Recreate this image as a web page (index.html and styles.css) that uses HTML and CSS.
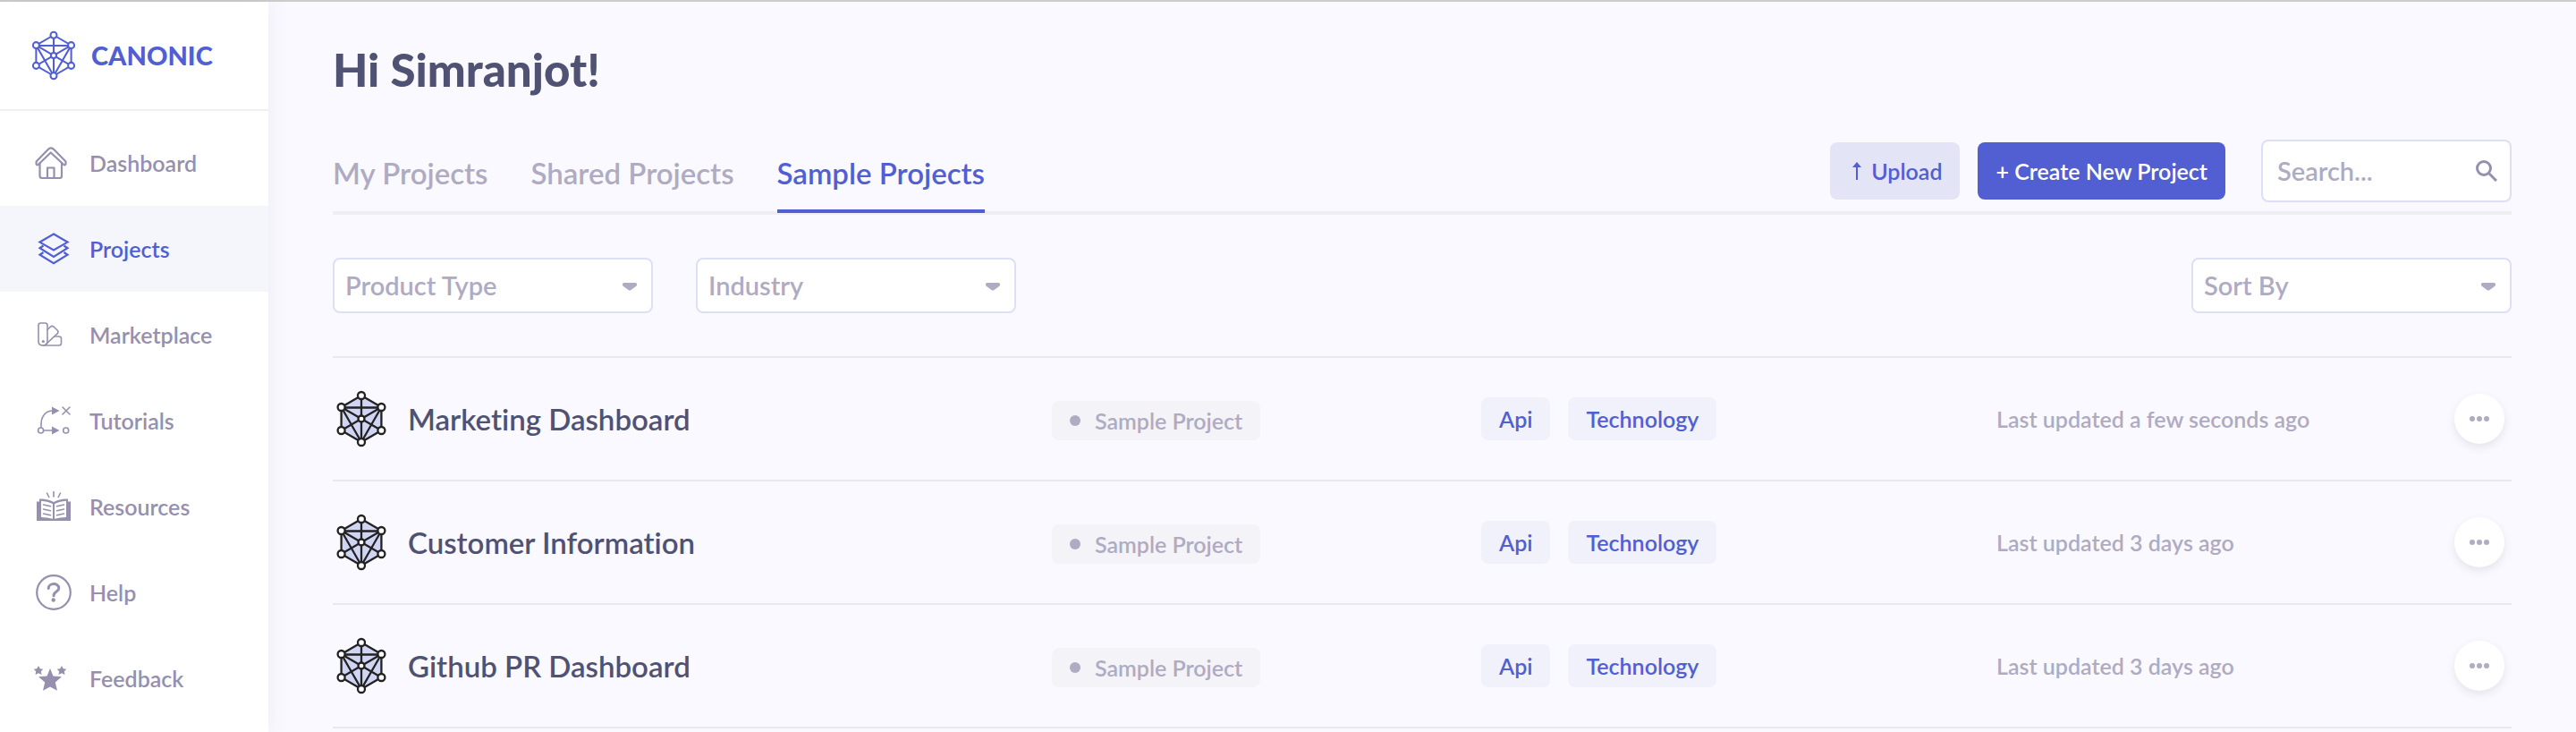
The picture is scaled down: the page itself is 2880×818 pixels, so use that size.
FILE: index.html
```html
<!DOCTYPE html>
<html lang="en">
<head>
<meta charset="utf-8">
<title>Canonic – Projects</title>
<meta name="viewport" content="width=device-width, initial-scale=1">
<link rel="stylesheet" href="styles.css">
</head>
<body>
<svg class="defs" aria-hidden="true">
  <symbol id="mesh" viewBox="0 0 56 64">
    <path class="mesh-fill" d="M28 6 50.400 19V45L28 58 5.600 45V19Z"/>
    <path class="mesh-line" d="M28 6 50.400 19V45L28 58 5.600 45V19ZM5.600 19.500H50.400M28 6V58M5.600 19 50.400 45M50.400 19 5.600 45M5.600 19 28 58 50.400 19"/>
    <g class="mesh-node"><circle cx="28" cy="6" r="4"/><circle cx="50.400" cy="19" r="4"/><circle cx="50.400" cy="45" r="4"/><circle cx="28" cy="58" r="4"/><circle cx="5.600" cy="45" r="4"/><circle cx="5.600" cy="19" r="4"/><circle cx="28" cy="32" r="3.500"/></g>
  </symbol>
  <symbol id="dots" viewBox="0 0 24 8"><circle cx="4" cy="4" r="3"/><circle cx="12" cy="4" r="3"/><circle cx="20" cy="4" r="3"/></symbol>
  <symbol id="caret" viewBox="0 0 16 9"><path d="M1.500 0H14.500Q16 0 16 1.500V2.500Q16 3.300 15 4L9.500 8Q8 9 6.500 8L1 4Q0 3.300 0 2.500V1.500Q0 0 1.500 0Z"/></symbol>
</svg>
<div class="app">
  <aside class="sidebar">
    <a class="brand" href="#"><svg class="brand-mark" aria-hidden="true"><use href="#mesh"/></svg><span>CANONIC</span></a>
    <nav class="nav" aria-label="Main">
      <a class="nav-item" href="#">
        <svg class="nav-icon" viewBox="0 0 40 40" aria-hidden="true"><g class="stroke"><path d="M8.500 20V34.500Q8.500 37 11 37H31Q33 37 33 34.500V20"/><path d="M20.700 8.500 7 21.800Q5.500 23 4.600 21.500V18.500L17.500 5.300Q21 1.500 24.500 5.300L37.500 18.500V21.500Q36.500 23 35 21.800Z"/><path d="M17 37V25.500H24.500V37"/></g></svg>
        <span>Dashboard</span></a>
      <a class="nav-item nav-item-active" href="#" aria-current="page">
        <svg class="nav-icon" viewBox="0 0 40 40" aria-hidden="true"><g class="stroke sharp"><path d="M24 3.500 39.500 12.600 24 21.500 8.500 12.600Z"/><path d="M12.500 16.500 8.500 19.300 24 29 39.500 19.300 35.500 16.500"/><path d="M12.500 24 8.500 26.800 24 36.300 39.500 26.800 35.500 24"/></g></svg>
        <span>Projects</span></a>
      <a class="nav-item" href="#">
        <svg class="nav-icon" viewBox="0 0 40 40" aria-hidden="true"><g class="stroke thin"><path d="M9.500 7H14.500Q17 7 17 9.500V27.500Q17 32 12 32 7 32 7 27.500V9.500Q7 7 9.500 7Z"/><path d="M17 14.500 20.500 11.200Q22.500 9.500 24.200 11.200L28.300 15.300Q29.800 17 28.300 18.700L15 31"/><path d="M12 32H29.800Q32.500 32 32.500 29.500V24.500Q32.500 22 30 22H25"/></g><circle cx="12.300" cy="27.500" r="1.600" fill="currentColor"/></svg>
        <span>Marketplace</span></a>
      <a class="nav-item" href="#">
        <svg class="nav-icon" viewBox="0 0 40 40" aria-hidden="true"><g class="stroke thin"><path d="M10 27.500C9 14 16 9 23 9"/><circle cx="9.600" cy="31" r="3"/><path d="M12.600 31H23"/><circle cx="37.700" cy="31" r="3"/><path d="M34 5 42 13M42 5 34 13"/></g><path fill="currentColor" d="M22 4.500 30.500 9 22 13.500ZM22 26.500 30.500 31 22 35.500Z"/></svg>
        <span>Tutorials</span></a>
      <a class="nav-item" href="#">
        <svg class="nav-icon" viewBox="0 0 40 40" aria-hidden="true"><path fill="currentColor" d="M5 14.500H8V11.500Q17 11 24 15 31 11 40 11.500V14.500H43V36H5Z"/><path fill="#fff" d="M10 13.800Q17 14 23 17V33.800Q17 32 10 32ZM38 13.800Q31 14 25 17V33.800Q31 32 38 32Z"/><g class="stroke thin"><path d="M12.500 18 20.500 19.800M12.500 23 20.500 24.800M12.500 28 20.500 29.800M35.500 18 27.500 19.800M35.500 23 27.500 24.800M35.500 28 27.500 29.800M24 3.500V9M16.500 5 18.800 9.500M31.500 5 29.200 9.500"/></g></svg>
        <span>Resources</span></a>
      <a class="nav-item" href="#">
        <svg class="nav-icon" viewBox="0 0 40 40" aria-hidden="true"><g class="stroke"><circle cx="24" cy="20" r="18.800"/></g><path d="M18.200 15.500C18.200 9 29.800 9 29.800 15.300 29.800 19.200 24 19 24 23.800" fill="none" stroke="currentColor" stroke-width="3" stroke-linecap="round"/><circle cx="23.700" cy="28.500" r="2.200" fill="currentColor"/></svg>
        <span>Help</span></a>
      <a class="nav-item" href="#">
        <svg class="nav-icon" viewBox="0 0 40 40" aria-hidden="true"><g fill="currentColor"><path d="M20 9 23.500 17.500 33 18.200 25.800 24.500 28 33.800 20 29.500 12 33.800 14.200 24.500 7 18.200 16.500 17.500Z"/><path id="star" d="M7 6 8.800 9.300 12.300 9.800 9.800 12.300 10.500 16 7 14.300 3.500 16 4.200 12.300 1.700 9.800 5.200 9.300Z"/><use href="#star" x="26"/></g></svg>
        <span>Feedback</span></a>
    </nav>
  </aside>
  <main class="main">
    <h1 class="greeting">Hi Simranjot!</h1>
    <div class="toolbar">
      <div class="tabs" role="tablist">
        <button class="tab" role="tab" type="button">My Projects</button>
        <button class="tab" role="tab" type="button">Shared Projects</button>
        <button class="tab tab-active" role="tab" type="button" aria-selected="true">Sample Projects</button>
      </div>
      <div class="actions">
        <button class="btn btn-light" type="button"><svg class="up" viewBox="0 0 12 20" aria-hidden="true"><path d="M6 4V20" fill="none" stroke="currentColor" stroke-width="2"/><path d="M6 0 11 6H1Z" fill="currentColor"/></svg>Upload</button>
        <button class="btn btn-primary" type="button">+ Create New Project</button>
        <label class="search"><input type="text" placeholder="Search..." aria-label="Search projects"><svg class="search-icon" viewBox="0 0 24 24" aria-hidden="true"><circle cx="9" cy="9" r="7.500"/><path d="M14.500 14.500 23 23"/></svg></label>
      </div>
    </div>
    <div class="filters">
      <div class="select"><select aria-label="Product Type"><option>Product Type</option></select><svg class="caret" aria-hidden="true"><use href="#caret"/></svg></div>
      <div class="select"><select aria-label="Industry"><option>Industry</option></select><svg class="caret" aria-hidden="true"><use href="#caret"/></svg></div>
      <div class="select select-end"><select aria-label="Sort By"><option>Sort By</option></select><svg class="caret" aria-hidden="true"><use href="#caret"/></svg></div>
    </div>
    <ul class="projects">
      <li class="project">
        <div class="project-name"><svg class="project-mark" aria-hidden="true"><use href="#mesh"/></svg><h2>Marketing Dashboard</h2></div>
        <div><span class="status">Sample Project</span></div>
        <div class="tags"><span class="tag">Api</span><span class="tag">Technology</span></div>
        <span class="updated">Last updated a few seconds ago</span>
        <button class="more" type="button" aria-label="More options"><svg aria-hidden="true"><use href="#dots"/></svg></button>
      </li>
      <li class="project">
        <div class="project-name"><svg class="project-mark" aria-hidden="true"><use href="#mesh"/></svg><h2>Customer Information</h2></div>
        <div><span class="status">Sample Project</span></div>
        <div class="tags"><span class="tag">Api</span><span class="tag">Technology</span></div>
        <span class="updated">Last updated 3 days ago</span>
        <button class="more" type="button" aria-label="More options"><svg aria-hidden="true"><use href="#dots"/></svg></button>
      </li>
      <li class="project">
        <div class="project-name"><svg class="project-mark" aria-hidden="true"><use href="#mesh"/></svg><h2>Github PR Dashboard</h2></div>
        <div><span class="status">Sample Project</span></div>
        <div class="tags"><span class="tag">Api</span><span class="tag">Technology</span></div>
        <span class="updated">Last updated 3 days ago</span>
        <button class="more" type="button" aria-label="More options"><svg aria-hidden="true"><use href="#dots"/></svg></button>
      </li>
    </ul>
  </main>
</div>
</body>
</html>
```
FILE: styles.css
```css
* { box-sizing: border-box; }

:root {
  --blue: #515fd3;
  --ink: #4f5272;
  --muted: #9690ae;
  --soft: #afabc2;
  --line: #e9e9ee;
}

body {
  margin: 0;
  background: #faf9ff;
  color: var(--ink);
  font-family: "Avenir Next", Lato, "Open Sans", sans-serif;
  font-size: 25px;
  font-weight: 600;
  font-variant-ligatures: none;
  line-height: 32px;
}

button, input, select { font: inherit; color: inherit; }
button { border: 0; background: none; padding: 0; cursor: pointer; }
a { color: inherit; text-decoration: none; }
h1, h2, ul { margin: 0; padding: 0; }

.defs { position: absolute; width: 0; height: 0; }

.app {
  display: flex;
  min-height: 100vh;
  border-top: 2px solid #cccccc;
}

.sidebar {
  flex: none;
  width: 300px;
  background: #fff;
  box-shadow: 0 0 24px rgba(80, 80, 130, 0.08);
}

.brand {
  display: flex;
  align-items: center;
  gap: 16px;
  height: 122px;
  padding-left: 34px;
  border-bottom: 2px solid #efeff4;
  color: var(--blue);
  font-size: 29px;
  font-weight: 900;
}
.brand-mark { width: 52px; height: 56px; }

.mesh-fill { fill: var(--mesh-fill, none); }
.mesh-line { fill: none; stroke: currentColor; stroke-width: 2.3; stroke-linejoin: round; }
.mesh-node { fill: #fff; stroke: currentColor; stroke-width: 2.3; }

.nav { padding-top: 10px; }
.nav-item {
  display: flex;
  align-items: center;
  gap: 24px;
  height: 96px;
  padding-left: 36px;
  color: var(--muted);
}
.nav-item-active { background: #f5f6fc; color: var(--blue); }
.nav-icon { width: 40px; height: 40px; overflow: visible; }
.stroke { fill: none; stroke: currentColor; stroke-width: 2.2; stroke-linecap: round; stroke-linejoin: round; }
.sharp { stroke-linecap: butt; stroke-linejoin: miter; }
.thin { stroke-width: 1.6; }

.main { flex: 1; min-width: 0; padding: 44px 72px 0; }

.greeting { font-size: 51px; line-height: 64px; font-weight: 900; }

.toolbar {
  display: flex;
  justify-content: space-between;
  margin-top: 46px;
  border-bottom: 4px solid #eeeef3;
}
.tabs { display: flex; gap: 48px; margin-bottom: -2px; }
.tab {
  padding: 0 0 4px;
  border-bottom: 4px solid transparent;
  color: var(--soft);
  font-size: 33px;
}
.tab-active { border-color: var(--blue); color: var(--blue); }

.actions { display: flex; align-items: center; padding-bottom: 10px; }
.btn { display: flex; align-items: center; height: 64px; padding: 0 20px; border-radius: 8px; }
.btn-light { gap: 10px; margin-right: 20px; padding-left: 24px; background: #e3e4f6; color: var(--blue); }
.btn-primary { background: var(--blue); color: #fff; }
.up { width: 12px; height: 20px; }
.search {
  display: flex;
  align-items: center;
  width: 280px;
  height: 70px;
  margin-left: 40px;
  padding: 0 14px 0 16px;
  border: 2px solid #dddff7;
  border-radius: 8px;
  background: #fff;
}
.search input { flex: 1; min-width: 0; padding: 0; border: 0; outline: 0; background: none; font-size: 29px; }
.search input::placeholder { color: var(--soft); opacity: 1; }
.search-icon { width: 24px; height: 24px; fill: none; stroke: var(--muted); stroke-width: 3; }

.filters { display: flex; gap: 48px; margin-top: 48px; }
.select { position: relative; width: 358px; }
.select-end { margin-left: auto; }
.select select {
  display: block;
  width: 100%;
  height: 62px;
  padding: 0 40px 0 12px;
  border: 2px solid #dddff7;
  border-radius: 8px;
  background: #fff;
  color: var(--soft);
  font-size: 29px;
  appearance: none;
}
.caret { position: absolute; top: 28px; right: 18px; width: 16px; height: 9px; fill: var(--soft); pointer-events: none; }

.projects { margin-top: 48px; border-top: 2px solid var(--line); list-style: none; }
.project {
  display: grid;
  grid-template-columns: minmax(0, 201fr) minmax(0, 120fr) minmax(0, 144fr) minmax(0, 128fr) 64px;
  align-items: center;
  height: 138px;
  border-bottom: 2px solid var(--line);
}
.project-name { display: flex; align-items: center; gap: 24px; padding-left: 4px; }
.project-mark { width: 56px; height: 64px; color: #222; --mesh-fill: #d0d5f3; }
.project h2 { font-size: 33px; line-height: 40px; font-weight: 600; }

.status {
  display: inline-flex;
  align-items: center;
  gap: 16px;
  height: 44px;
  margin-top: 4px;
  padding: 0 20px;
  border-radius: 8px;
  background: #f3f3f8;
  color: var(--soft);
}
.status::before { content: ""; width: 12px; height: 12px; border-radius: 50%; background: currentColor; }
.tags { display: flex; gap: 20px; }
.tag { padding: 8px 20px; border-radius: 8px; background: #f0f1fb; color: var(--blue); }
.updated { color: var(--soft); }
.more {
  display: flex;
  align-items: center;
  justify-content: center;
  width: 56px;
  height: 56px;
  border-radius: 50%;
  background: #fff;
  box-shadow: 0 4px 10px rgba(80, 80, 110, 0.12);
}
.more svg { width: 24px; height: 8px; fill: var(--soft); }
```
